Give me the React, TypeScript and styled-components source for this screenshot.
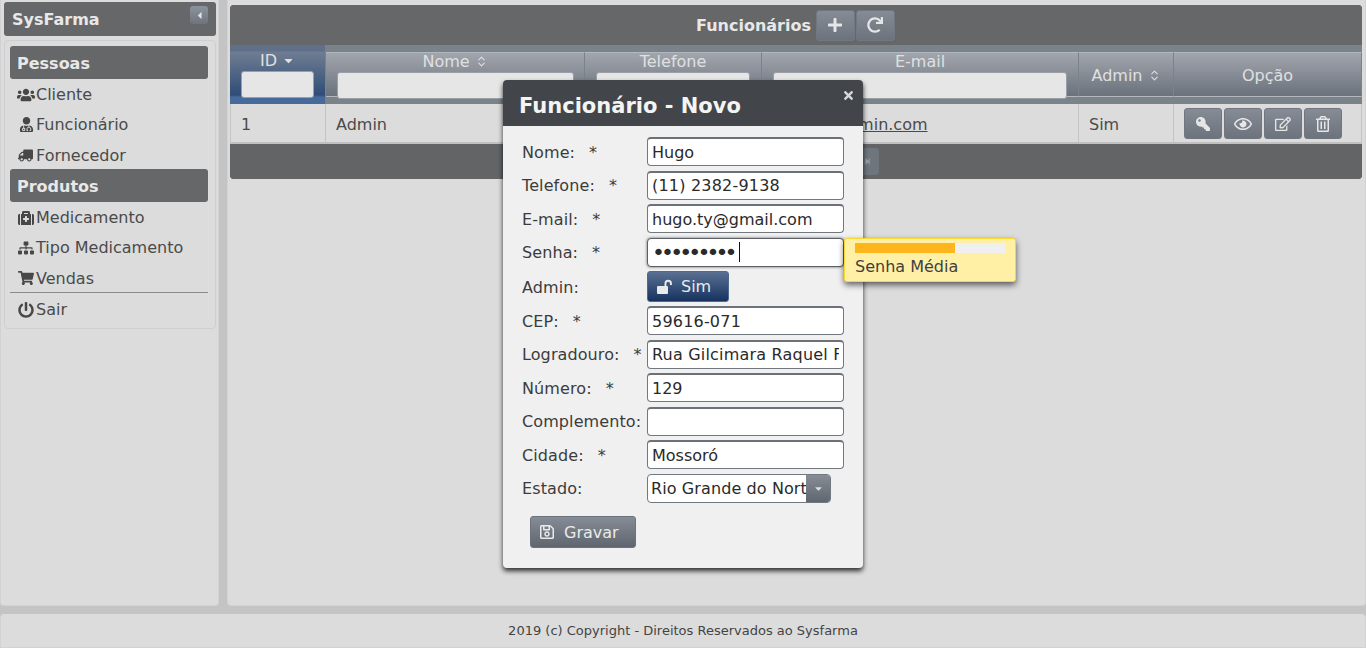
import React from "react";
import styled, { createGlobalStyle } from "styled-components";
import {
  FaUsers,
  FaUserMd,
  FaTruck,
  FaMedkit,
  FaSitemap,
  FaShoppingCart,
  FaPowerOff,
  FaPlus,
  FaRedo,
  FaKey,
  FaRegEye,
  FaRegEdit,
  FaRegTrashAlt,
  FaTimes,
  FaRegSave,
  FaCaretDown,
  FaCaretLeft,
  FaStepForward,
} from "react-icons/fa";
import { ChevronsUpDown } from "lucide-react";

const GlobalStyle = createGlobalStyle`
  html, body {
    margin: 0;
    padding: 0;
    background: #c4c4c4;
    font-family: "DejaVu Sans", Verdana, sans-serif;
    font-size: 16px;
    color: #444;
    overflow: hidden;
  }
  * { box-sizing: border-box; }
`;

const Layout = styled.div`
  position: relative;
  width: 1366px;
  height: 648px;
  display: grid;
  grid-template-columns: 219px 1139px;
  grid-template-rows: 606px 34px;
  column-gap: 8px;
  row-gap: 8px;
`;

const Panel = styled.div`
  background: #dcdcdc;
  border-radius: 0 0 4px 4px;
  border: 1px solid #d2d2d2;
  border-top: none;
`;

const West = styled(Panel)`
  padding: 2px 2px 0 3px;
  width: 219px;
`;

const WestHeader = styled.div`
  height: 34px;
  background: #666769;
  border-radius: 3px;
  color: #e8e8e8;
  font-weight: bold;
  font-size: 16px;
  display: flex;
  align-items: center;
  justify-content: space-between;
  padding: 1px 8px 0 8px;
  margin-bottom: 4px;
`;

const Collapse = styled.div`
  width: 18px;
  height: 18px;
  margin-top: -9px;
  border-radius: 3px;
  background: linear-gradient(#8d939c, #6d747e);
  color: #e4e4e4;
  font-size: 11px;
  display: flex;
  align-items: center;
  justify-content: center;
`;

const Menu = styled.nav`
  border: 1px solid #cfcfcf;
  border-radius: 4px;
  padding: 5px 7px 4px 5px;
  height: 289px;
`;

const MenuHeading = styled.div`
  height: 33px;
  background: #666769;
  border-radius: 3px;
  color: #e8e8e8;
  font-weight: bold;
  font-size: 16px;
  line-height: 35px;
  padding-left: 7px;
  margin-bottom: -1px;
`;

const MenuItem = styled.div`
  height: 30.33px;
  display: flex;
  align-items: center;
  gap: 1px;
  padding: 3px 0 0 7px;
  color: #4a4a4a;
  font-size: 16px;
`;

const MenuIcon = styled.span<{ $size?: number; $flip?: boolean }>`
  width: 18px;
  display: flex;
  justify-content: center;
  font-size: ${(p) => p.$size ?? 16}px;
  color: #474747;
  transform: ${(p) => (p.$flip ? "scaleX(-1)" : "none")};
`;

const MenuRule = styled.div`
  height: 1px;
  background: #8b8b8b;
`;

const Center = styled(Panel)`
  padding: 5px 3px 0 2px;
  width: 1139px;
`;

const Grid = styled.section`
  border-radius: 4px;
  overflow: hidden;
  height: 174px;
  background: #666769;
`;

const TitleBar = styled.header`
  height: 40px;
  background: #666769;
  display: flex;
  align-items: center;
  justify-content: center;
  gap: 1px;
  color: #e8e8e8;
  font-weight: bold;
  font-size: 16px;
  padding-right: 1px;
`;

const TitleText = styled.span`
  margin-right: 4px;
`;

const GrayButton = styled.button<{ $w: number; $h?: number }>`
  width: ${(p) => p.$w}px;
  height: ${(p) => p.$h ?? 31}px;
  padding: 0;
  border: 1px solid #707780;
  border-radius: 3px;
  background: linear-gradient(#868c95, #6c737d);
  color: #e6e6e6;
  display: flex;
  align-items: center;
  justify-content: center;
  font-size: 16px;
`;

const HeadRow = styled.div`
  height: 59px;
  background: #7b838a;
  display: grid;
  grid-template-columns: 96px 259px 177px 317px 95px 1fr;
`;

const HeadCell = styled.div<{ $active?: boolean }>`
  position: relative;
  margin: ${(p) => (p.$active ? "0" : "7px 0")};
  padding-top: ${(p) => (p.$active ? "7px" : "0")};
  height: ${(p) => (p.$active ? "59px" : "45px")};
  border-right: 1px solid #7b838a;
  background: ${(p) =>
    p.$active
      ? "linear-gradient(#5f7088 0, #5f7088 6px, #6f7d92 7px, #2f4d77 50px, #466a9a 52px, #466a9a 59px)"
      : "linear-gradient(#a1a5ae, #6b727c)"};
  border-top: ${(p) => (p.$active ? "none" : "1px solid #b3b7bd")};
  border-bottom: ${(p) => (p.$active ? "none" : "1px solid #b3b7bd")};
  color: #e0e0e0;
  text-align: center;
  font-size: 16px;
`;

const HeadLabel = styled.div<{ $tall?: boolean }>`
  line-height: ${(p) => (p.$tall ? "45px" : "17px")};
  display: flex;
  justify-content: center;
  align-items: center;
  gap: 5px;
`;

const SortGlyph = styled.span`
  display: flex;
  font-size: 13px;
  color: #e0e0e0;
`;

const Filter = styled.input<{ $l: number; $r: number; $top: number }>`
  position: absolute;
  left: ${(p) => p.$l}px;
  right: ${(p) => p.$r}px;
  top: ${(p) => p.$top}px;
  height: 27px;
  border: 1px solid #9a9fa6;
  border-radius: 3px;
  background: #e6e6e6;
`;

const BodyRow = styled.div`
  height: 40px;
  background: #dcdcdc;
  border-left: 1px solid #c4c4c4;
  border-right: 1px solid #c4c4c4;
  border-bottom: 2px solid #c0c0c0;
  display: grid;
  grid-template-columns: 95px 259px 177px 317px 95px 1fr;
  color: #4a4a4a;
  font-size: 16px;
`;

const BodyCell = styled.div`
  border-right: 1px solid #c4c4c4;
  padding: 2px 0 0 10px;
  display: flex;
  align-items: center;
  gap: 2px;
  &:last-child { border-right: none; }
`;

const Underlined = styled.span`
  text-decoration: underline;
`;

const ActionCell = styled(BodyCell)`
  padding: 1px 0 0 10px;
`;

const KeyIcon = styled(FaKey)`
  transform: scaleX(-1);
  font-size: 14px;
`;

const EyeIcon = styled(FaRegEye)`
  font-size: 18px;
`;

const GridFooter = styled.footer`
  height: 35px;
  background: #636466;
  display: flex;
  align-items: center;
  justify-content: center;
  gap: 2px;
`;

const PageButton = styled(GrayButton)`
  background: #6e757c;
  border-color: #6e757c;
  color: #9a9fa5;
  font-size: 7px;
  margin-top: -1px;
`;

const PageEnd = styled(FaStepForward)`
  margin-left: 142px;
`;

const South = styled(Panel)`
  grid-column: 1 / span 2;
  border-radius: 4px 4px 0 0;
  height: 34px;
  display: flex;
  align-items: center;
  justify-content: center;
  font-size: 13px;
  color: #444;
`;

const Dialog = styled.div`
  position: absolute;
  left: 503px;
  top: 80px;
  width: 360px;
  height: 488px;
  background: #f0f0f0;
  border-radius: 4px;
  box-shadow: 0 3px 5px rgba(0, 0, 0, 0.8);
`;

const DialogTitle = styled.div`
  position: relative;
  height: 46px;
  background: #42464a;
  border-radius: 4px 4px 0 0;
  color: #f4f4f4;
  font-weight: bold;
  font-size: 21px;
  line-height: 53px;
  padding-left: 16px;
`;

const CloseIcon = styled.span`
  position: absolute;
  top: 9px;
  right: 8px;
  display: flex;
  font-size: 13px;
  color: #d8d8d8;
`;

const Form = styled.form`
  padding: 11px 19px 0;
  color: #3c3c3c;
`;

const Row = styled.div<{ $h?: number }>`
  display: grid;
  grid-template-columns: 125px auto;
  height: ${(p) => p.$h ?? 33.5}px;
  align-items: start;
  position: relative;
  font-size: 16px;
`;

const Label = styled.label<{ $top?: number }>`
  display: flex;
  gap: 14px;
  padding-top: ${(p) => p.$top ?? 5.5}px;
  line-height: 19px;
  letter-spacing: 0.1px;
  white-space: nowrap;
`;

const Field = styled.input<{ $wide?: boolean }>`
  width: 197px;
  height: 29px;
  padding: 0 4px;
  border: 1px solid #717880;
  border-top: 2px solid #6c7178;
  border-radius: 4px;
  background: #fff;
  color: #2a2a2a;
  font: 16px "DejaVu Sans", Verdana, sans-serif;
  letter-spacing: ${(p) => (p.$wide ? "0.2px" : "0")};
  outline: none;
`;

const PasswordField = styled.div`
  width: 197px;
  height: 29px;
  padding: 0 4px;
  border: 1px solid #5c6066;
  border-radius: 4px;
  background: #fff;
  color: #2a2a2a;
  box-shadow: 0 0 3px rgba(0, 0, 0, 0.6);
  display: flex;
  align-items: center;
  font-size: 22px;
  letter-spacing: -3.9px;
`;

const Caret = styled.span`
  width: 1px;
  height: 20px;
  margin-left: 5px;
  background: #111;
`;

const ToggleButton = styled.button`
  width: 82px;
  height: 31px;
  padding: 0 0 0 9px;
  border: 1px solid #4d6a93;
  border-radius: 3px;
  background: linear-gradient(#5a7092, #16335f);
  color: #eaeaea;
  font: 16px "DejaVu Sans", Verdana, sans-serif;
  display: flex;
  align-items: center;
  gap: 6px;
`;

const SelectBox = styled.div`
  width: 184px;
  height: 29px;
  display: flex;
  border: 1px solid #717880;
  border-radius: 4px;
  background: #fff;
  overflow: hidden;
`;

const SelectValue = styled.div`
  flex: 1;
  overflow: hidden;
  white-space: nowrap;
  padding-left: 3px;
  line-height: 27px;
  font-size: 16px;
  letter-spacing: 0.1px;
  color: #2a2a2a;
`;

const SelectArrow = styled.div`
  width: 24px;
  background: linear-gradient(#878d96, #5f6670);
  color: #dedede;
  font-size: 11px;
  display: flex;
  align-items: center;
  justify-content: center;
`;

const SaveButton = styled.button`
  width: 106px;
  height: 32px;
  margin: 9px 0 0 8px;
  padding: 0 0 0 8px;
  border: 1px solid #6c737d;
  border-radius: 3px;
  background: linear-gradient(#868c95, #5f6670);
  color: #eaeaea;
  font: 16px "DejaVu Sans", Verdana, sans-serif;
  display: flex;
  align-items: center;
  gap: 9px;
`;

const StrengthTip = styled.div`
  position: absolute;
  left: 322px;
  top: 0;
  width: 172px;
  height: 44px;
  padding: 4px 10px 0;
  background: #fff0a5;
  border: 1px solid #fcd72f;
  border-radius: 3px;
  box-shadow: 0 3px 6px rgba(0, 0, 0, 0.6);
  color: #3f3f3f;
  font-size: 16px;
  z-index: 2;
`;

const Meter = styled.div`
  height: 10px;
  background: #f0f0f0;
  margin-bottom: 4px;
`;

const MeterFill = styled.div`
  height: 100%;
  background: #ffb61c;
`;

const UnlockIcon = () => (
  <svg width="18" height="15" viewBox="0 0 18 15" fill="currentColor">
    <rect x="0" y="7" width="11" height="8" rx="1" />
    <path d="M7.5 7V4.5a3.7 3.7 0 0 1 7.4 0V6h-1.9V4.6a1.8 1.8 0 0 0-3.6 0V7z" />
  </svg>
);

const menuPessoas = [
  { icon: <MenuIcon $size={18}><FaUsers /></MenuIcon>, label: "Cliente" },
  { icon: <MenuIcon $size={15}><FaUserMd /></MenuIcon>, label: "Funcionário" },
  { icon: <MenuIcon $size={15} $flip><FaTruck /></MenuIcon>, label: "Fornecedor" },
];

const menuProdutos = [
  { icon: <MenuIcon><FaMedkit /></MenuIcon>, label: "Medicamento" },
  { icon: <MenuIcon><FaSitemap /></MenuIcon>, label: "Tipo Medicamento" },
  { icon: <MenuIcon><FaShoppingCart /></MenuIcon>, label: "Vendas" },
];

const fields = [
  { label: "Nome:", value: "Hugo", required: true },
  { label: "Telefone:", value: "(11) 2382-9138", required: true, wide: true },
  { label: "E-mail:", value: "hugo.ty@gmail.com", required: true },
];

const addressFields = [
  { label: "CEP:", value: "59616-071", required: true, wide: true },
  { label: "Logradouro:", value: "Rua Gilcimara Raquel Fernandes", required: true, wide: true },
  { label: "Número:", value: "129", required: true },
  { label: "Complemento:", value: "", required: false },
  { label: "Cidade:", value: "Mossoró", required: true },
];

type TextRowProps = { label: string; value: string; required: boolean; wide?: boolean };

const TextRow = ({ label, value, required, wide }: TextRowProps) => (
  <Row>
    <Label>
      <span>{label}</span>
      {required ? <span>*</span> : null}
    </Label>
    <Field defaultValue={value} $wide={wide} />
  </Row>
);

export default function App() {
  return (
    <>
      <GlobalStyle />
      <Layout>
        <West>
          <WestHeader>
            SysFarma
            <Collapse>
              <FaCaretLeft />
            </Collapse>
          </WestHeader>
          <Menu>
            <MenuHeading>Pessoas</MenuHeading>
            {menuPessoas.map((item) => (
              <MenuItem key={item.label}>
                {item.icon}
                {item.label}
              </MenuItem>
            ))}
            <MenuHeading>Produtos</MenuHeading>
            {menuProdutos.map((item) => (
              <MenuItem key={item.label}>
                {item.icon}
                {item.label}
              </MenuItem>
            ))}
            <MenuRule />
            <MenuItem>
              <MenuIcon>
                <FaPowerOff />
              </MenuIcon>
              Sair
            </MenuItem>
          </Menu>
        </West>

        <Center>
          <Grid>
            <TitleBar>
              <TitleText>Funcionários</TitleText>
              <GrayButton $w={39}>
                <FaPlus />
              </GrayButton>
              <GrayButton $w={39}>
                <FaRedo />
              </GrayButton>
            </TitleBar>
            <HeadRow>
              <HeadCell $active>
                <HeadLabel>
                  ID
                  <SortGlyph>
                    <FaCaretDown />
                  </SortGlyph>
                </HeadLabel>
                <Filter $l={11} $r={11} $top={26} />
              </HeadCell>
              <HeadCell>
                <HeadLabel>
                  Nome
                  <SortGlyph>
                    <ChevronsUpDown size={13} />
                  </SortGlyph>
                </HeadLabel>
                <Filter $l={11} $r={10} $top={19} />
              </HeadCell>
              <HeadCell>
                <HeadLabel>Telefone</HeadLabel>
                <Filter $l={11} $r={11} $top={19} />
              </HeadCell>
              <HeadCell>
                <HeadLabel>E-mail</HeadLabel>
                <Filter $l={11} $r={11} $top={19} />
              </HeadCell>
              <HeadCell>
                <HeadLabel $tall>
                  Admin
                  <SortGlyph>
                    <ChevronsUpDown size={13} />
                  </SortGlyph>
                </HeadLabel>
              </HeadCell>
              <HeadCell>
                <HeadLabel $tall>Opção</HeadLabel>
              </HeadCell>
            </HeadRow>
            <BodyRow>
              <BodyCell>1</BodyCell>
              <BodyCell>Admin</BodyCell>
              <BodyCell />
              <BodyCell>
                <Underlined>admin@admin.com</Underlined>
              </BodyCell>
              <BodyCell>Sim</BodyCell>
              <ActionCell>
                <GrayButton $w={38}>
                  <KeyIcon />
                </GrayButton>
                <GrayButton $w={38}>
                  <EyeIcon />
                </GrayButton>
                <GrayButton $w={38}>
                  <FaRegEdit />
                </GrayButton>
                <GrayButton $w={38}>
                  <FaRegTrashAlt />
                </GrayButton>
              </ActionCell>
            </BodyRow>
            <GridFooter>
              <PageButton $w={166} $h={27}>
                <PageEnd />
              </PageButton>
            </GridFooter>
          </Grid>
        </Center>

        <South>2019 (c) Copyright - Direitos Reservados ao Sysfarma</South>

        <Dialog>
          <DialogTitle>
            Funcionário - Novo
            <CloseIcon>
              <FaTimes />
            </CloseIcon>
          </DialogTitle>
          <Form>
            {fields.map((f) => (
              <TextRow key={f.label} {...f} />
            ))}
            <Row>
              <Label>
                <span>Senha:</span>
                <span>*</span>
              </Label>
              <PasswordField>
                •••••••••
                <Caret />
              </PasswordField>
              <StrengthTip>
                <Meter>
                  <MeterFill style={{ width: "66.6%" }} />
                </Meter>
                Senha Média
              </StrengthTip>
            </Row>
            <Row $h={35}>
              <Label $top={6.5}>Admin:</Label>
              <ToggleButton type="button">
                <UnlockIcon />
                Sim
              </ToggleButton>
            </Row>
            {addressFields.map((f) => (
              <TextRow key={f.label} {...f} />
            ))}
            <Row>
              <Label>Estado:</Label>
              <SelectBox>
                <SelectValue>Rio Grande do Norte</SelectValue>
                <SelectArrow>
                  <FaCaretDown />
                </SelectArrow>
              </SelectBox>
            </Row>
            <SaveButton type="button">
              <FaRegSave size={16} />
              Gravar
            </SaveButton>
          </Form>
        </Dialog>
      </Layout>
    </>
  );
}
